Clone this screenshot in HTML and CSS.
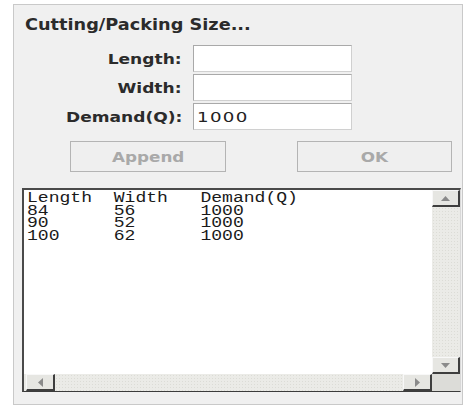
FILE: index.html
```html
<!DOCTYPE html>
<html lang="en">

<head>
    <meta http-equiv="content-type" content="text/html; charset=utf-8" />
    <title>Cutting/Packing Size</title>
<link rel="stylesheet" href="styles.css">
</head>
<body>
    <div class="dialog">
        <div class="title"><span class="wide">Cutting/Packing Size...</span></div>

        <div class="fields">
            <label class="field-label"><span class="wide">Length:</span></label>
            <div class="field"></div>
            <label class="field-label"><span class="wide">Width:</span></label>
            <div class="field"></div>
            <label class="field-label"><span class="wide">Demand(Q):</span></label>
            <div class="field"><span class="field-value">1000</span></div>
        </div>

        <div class="buttons">
            <div class="btn btn-append"><span class="wide">Append</span></div>
            <div class="btn btn-ok"><span class="wide">OK</span></div>
        </div>

        <div class="listbox">
            <div class="list-view">
<pre class="rows">Length  Width   Demand(Q)
84      56      1000
90      52      1000
100     62      1000</pre>
            </div>
            <div class="vscroll">
                <div class="sbtn"><svg width="9" height="5" viewBox="0 0 9 5"><path d="M0 5 L4.5 0 L9 5 Z" fill="#8a8a8a"/></svg></div>
                <div class="track"></div>
                <div class="sbtn"><svg width="9" height="5" viewBox="0 0 9 5"><path d="M0 0 L4.5 5 L9 0 Z" fill="#8a8a8a"/></svg></div>
            </div>
            <div class="hscroll">
                <div class="sbtn"><svg width="5" height="9" viewBox="0 0 5 9"><path d="M5 0 L0 4.5 L5 9 Z" fill="#8a8a8a"/></svg></div>
                <div class="track"></div>
                <div class="sbtn"><svg width="5" height="9" viewBox="0 0 5 9"><path d="M0 0 L5 4.5 L0 9 Z" fill="#8a8a8a"/></svg></div>
            </div>
            <div class="corner"></div>
        </div>
    </div>
</body>
</html>
```

FILE: styles.css
```css
body {
  margin: 0;
  background: #fff;
  font-family: "DejaVu Sans", sans-serif;
  color: #2b2b2b;
}
/* old swing-style font is wide, stretch the glyphs */
.wide {
  display: inline-block;
  transform: scaleX(1.18);
  transform-origin: left center;
  white-space: nowrap;
}
.dialog {
  margin: 4px 0 0 13px;
  width: 448px;
  height: 399px;
  border: 1px solid #c9c9c9;
  background: #f0f0f0;
  display: flex;
  flex-direction: column;
}
.title {
  margin: 12px 0 0 11px;
  font-size: 15px;
  font-weight: bold;
  line-height: 16px;
}
.fields {
  margin-top: 12px;
  display: grid;
  grid-template-columns: 168px 159px;
  grid-auto-rows: 27px;
  column-gap: 11px;
  row-gap: 2px;
}
.field-label {
  font-size: 14px;
  font-weight: bold;
  display: flex;
  align-items: center;
  justify-content: flex-end;
}
.field-label .wide {
  transform: scaleX(1.22);
  transform-origin: right center;
}
.field {
  box-sizing: border-box;
  background: #fff;
  border: 1px solid #a9a9a9;
  border-right-color: #d0d0d0;
  border-bottom-color: #d0d0d0;
  display: flex;
  align-items: center;
  padding-left: 3px;
}
.field-value {
  display: inline-block;
  font-size: 14px;
  color: #222;
  letter-spacing: 1px;
  transform: scaleX(1.3);
  transform-origin: left center;
}
.buttons {
  margin-top: 11px;
  display: flex;
  padding-left: 56px;
  gap: 71px;
}
.btn {
  box-sizing: border-box;
  height: 31px;
  border: 1px solid #b4b4b4;
  background: #efefef;
  color: #a9a9a9;
  font-size: 14px;
  font-weight: bold;
  display: flex;
  align-items: center;
  justify-content: center;
}
.btn .wide {
  transform: scaleX(1.2);
  transform-origin: center;
}
.btn-append {
  width: 156px;
}
.btn-ok {
  width: 155px;
}
.listbox {
  margin: 16px 0 0 8px;
  width: 439px;
  height: 204px;
  box-sizing: border-box;
  border: 2px solid #4a4a4a;
  border-right: 1px solid #d8d8d8;
  border-bottom: 1px solid #3c3c3c;
  background: #fff;
  display: grid;
  grid-template-columns: 1fr 28px;
  grid-template-rows: 1fr 17px;
}
.list-view {
  overflow: hidden;
  padding: 2px 0 0 3px;
}
.rows {
  margin: 0;
  font-family: "Liberation Mono", monospace;
  font-size: 14px;
  line-height: 12.5px;
  color: #1a1a1a;
  transform: scaleX(1.29);
  transform-origin: left top;
}
.vscroll {
  display: flex;
  flex-direction: column;
  background: #ebebe7;
}
.hscroll {
  display: flex;
  background: #ebebe7;
  padding-left: 2px;
}
.track {
  flex: 1;
  background-image: radial-gradient(#dcdcd6 0.6px, transparent 0.8px);
  background-size: 3px 3px;
}
.sbtn {
  box-sizing: border-box;
  border: 1px solid #f8f8f8;
  border-right: 2px solid #3e3e3e;
  border-bottom: 2px solid #3e3e3e;
  background: #e6e6e2;
  display: flex;
  align-items: center;
  justify-content: center;
}
.vscroll .sbtn {
  height: 17px;
}
.hscroll .sbtn {
  width: 29px;
}
.corner {
  background: #dcdcd8;
}
```
